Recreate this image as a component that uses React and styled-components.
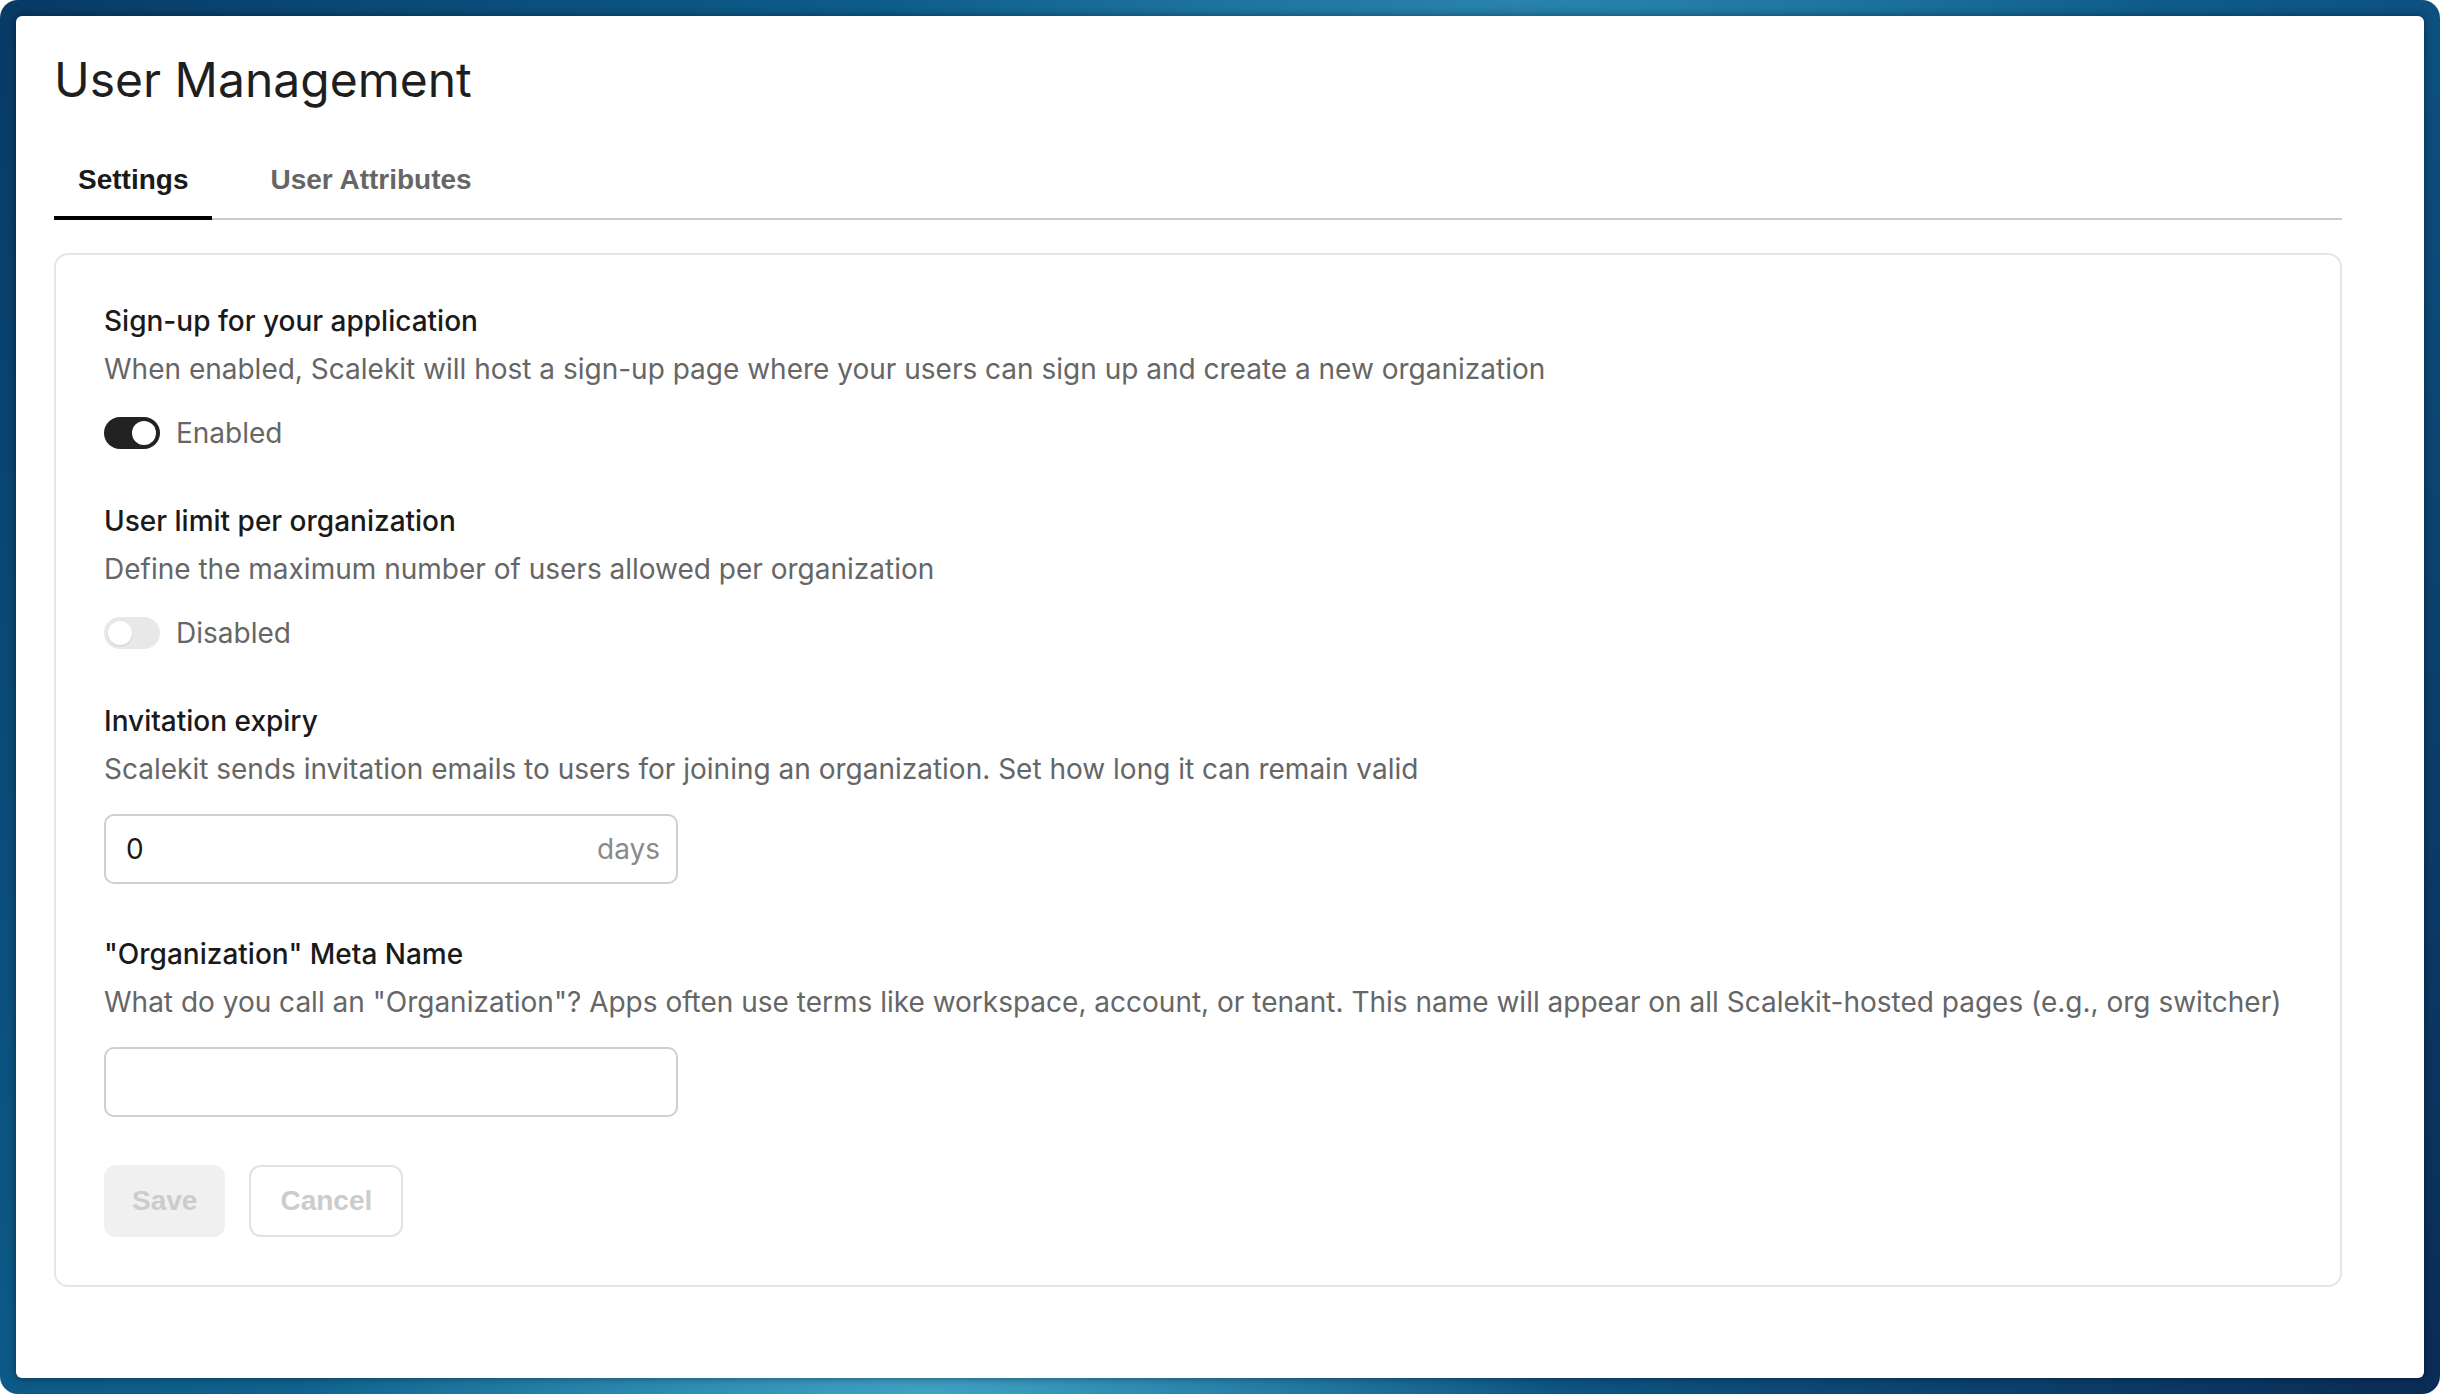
import React from "react";
import styled, { createGlobalStyle } from "styled-components";

const Global = createGlobalStyle`
  html, body { margin: 0; padding: 0; background: #ffffff; }
  * { box-sizing: border-box; }
  body { font-family: Inter, "Noto Sans", sans-serif; }
`;

const Frame = styled.div`
  width: 2440px;
  height: 1394px;
  border-radius: 18px;
  padding: 16px;
  overflow: hidden;
  background:
    radial-gradient(ellipse 900px 260px at 38% 100%, rgba(70, 170, 205, 0.85) 0%, rgba(70, 170, 205, 0) 70%),
    radial-gradient(ellipse 900px 200px at 62% 0%, rgba(50, 140, 180, 0.7) 0%, rgba(50, 140, 180, 0) 70%),
    linear-gradient(120deg, #083a66 0%, #0d5a88 25%, #14709c 50%, #0d5585 72%, #0a2c56 100%);
`;

const Panel = styled.div`
  height: 100%;
  background: #ffffff;
  border-radius: 6px;
  box-shadow: 0 0 8px rgba(0, 0, 0, 0.45);
  padding: 35px 82px 0 38px;
  display: flex;
  flex-direction: column;
`;

const Title = styled.h1`
  margin: 0;
  font-family: Inter, sans-serif;
  font-weight: 400;
  font-size: 48px;
  line-height: 58px;
  color: #1f1f1f;
`;

const TabBar = styled.div`
  margin-top: 51px;
  display: flex;
  gap: 34px;
  border-bottom: 2px solid #cccccc;
`;

const Tab = styled.div`
  font-family: "Liberation Sans", Arial, sans-serif;
  font-weight: 700;
  font-size: 28px;
  line-height: 40px;
  padding: 0 24px 16px;
  margin-bottom: -2px;
  border-bottom: 4px solid ${(p) => (p.$active ? "#000000" : "transparent")};
  color: ${(p) => (p.$active ? "#1a1a1a" : "#666666")};
`;

const Card = styled.div`
  margin-top: 33px;
  border: 2px solid #e6e6e6;
  border-radius: 14px;
  padding: 48px;
  display: flex;
  flex-direction: column;
`;

const Section = styled.section`
  display: flex;
  flex-direction: column;
  align-items: flex-start;
  & + & {
    margin-top: 52px;
  }
`;

const Heading = styled.div`
  font-family: Inter, sans-serif;
  font-weight: 500;
  font-size: 28px;
  line-height: 36px;
  color: #1a1a1a;
`;

const Description = styled.div`
  margin-top: 12px;
  font-family: Inter, sans-serif;
  font-weight: 400;
  font-size: 28px;
  line-height: 36px;
  color: #666666;
`;

const ToggleRow = styled.div`
  margin-top: 28px;
  display: flex;
  align-items: center;
  gap: 16px;
  height: 36px;
`;

const Track = styled.div`
  position: relative;
  width: 56px;
  height: 32px;
  border-radius: 16px;
  background: ${(p) => (p.$on ? "#222222" : "#e8e8e8")};
  flex-shrink: 0;
`;

const Knob = styled.div`
  position: absolute;
  top: 4px;
  left: ${(p) => (p.$on ? "28px" : "4px")};
  width: 24px;
  height: 24px;
  border-radius: 50%;
  background: #ffffff;
  box-shadow: ${(p) => (p.$on ? "none" : "0 1px 2px rgba(0,0,0,0.12)")};
`;

const ToggleLabel = styled.span`
  font-family: Inter, sans-serif;
  font-size: 28px;
  line-height: 36px;
  color: #666666;
`;

const Field = styled.div`
  margin-top: 27px;
  width: 574px;
  height: 70px;
  border: 2px solid #cfcfcf;
  border-radius: 10px;
  padding: 0 16px 0 20px;
  display: flex;
  align-items: center;
  gap: 12px;
`;

const TextInput = styled.input`
  flex: 1;
  min-width: 0;
  border: none;
  outline: none;
  padding: 0;
  background: transparent;
  font-family: Inter, sans-serif;
  font-size: 28px;
  color: #1a1a1a;
`;

const Suffix = styled.span`
  font-family: Inter, sans-serif;
  font-size: 28px;
  color: #8a8a8a;
`;

const Actions = styled.div`
  margin-top: 48px;
  display: flex;
  gap: 24px;
`;

const Button = styled.button`
  height: 72px;
  padding: 0 ${(p) => (p.$variant === "primary" ? "26px" : "29px")};
  border-radius: 12px;
  font-family: "Liberation Sans", Arial, sans-serif;
  font-weight: 700;
  font-size: 28px;
  color: #cccccc;
  cursor: default;
  background: ${(p) => (p.$variant === "primary" ? "#f0f0f0" : "#ffffff")};
  border: 2px solid ${(p) => (p.$variant === "primary" ? "#f0f0f0" : "#e2e2e2")};
`;

function Toggle({ on, label }) {
  return (
    <ToggleRow>
      <Track $on={on}>
        <Knob $on={on} />
      </Track>
      <ToggleLabel>{label}</ToggleLabel>
    </ToggleRow>
  );
}

export default function App() {
  return (
    <>
      <Global />
      <Frame>
        <Panel>
          <Title>User Management</Title>
          <TabBar>
            <Tab $active>Settings</Tab>
            <Tab>User Attributes</Tab>
          </TabBar>
          <Card>
            <Section>
              <Heading>Sign-up for your application</Heading>
              <Description>
                When enabled, Scalekit will host a sign-up page where your users can sign up and create a new organization
              </Description>
              <Toggle on label="Enabled" />
            </Section>
            <Section>
              <Heading>User limit per organization</Heading>
              <Description>Define the maximum number of users allowed per organization</Description>
              <Toggle on={false} label="Disabled" />
            </Section>
            <Section>
              <Heading>Invitation expiry</Heading>
              <Description>
                Scalekit sends invitation emails to users for joining an organization. Set how long it can remain valid
              </Description>
              <Field>
                <TextInput defaultValue="0" readOnly />
                <Suffix>days</Suffix>
              </Field>
            </Section>
            <Section>
              <Heading>"Organization" Meta Name</Heading>
              <Description>
                What do you call an "Organization"? Apps often use terms like workspace, account, or tenant. This name will appear on all Scalekit-hosted pages (e.g., org switcher)
              </Description>
              <Field>
                <TextInput defaultValue="" readOnly />
              </Field>
            </Section>
            <Actions>
              <Button $variant="primary">Save</Button>
              <Button>Cancel</Button>
            </Actions>
          </Card>
        </Panel>
      </Frame>
    </>
  );
}
